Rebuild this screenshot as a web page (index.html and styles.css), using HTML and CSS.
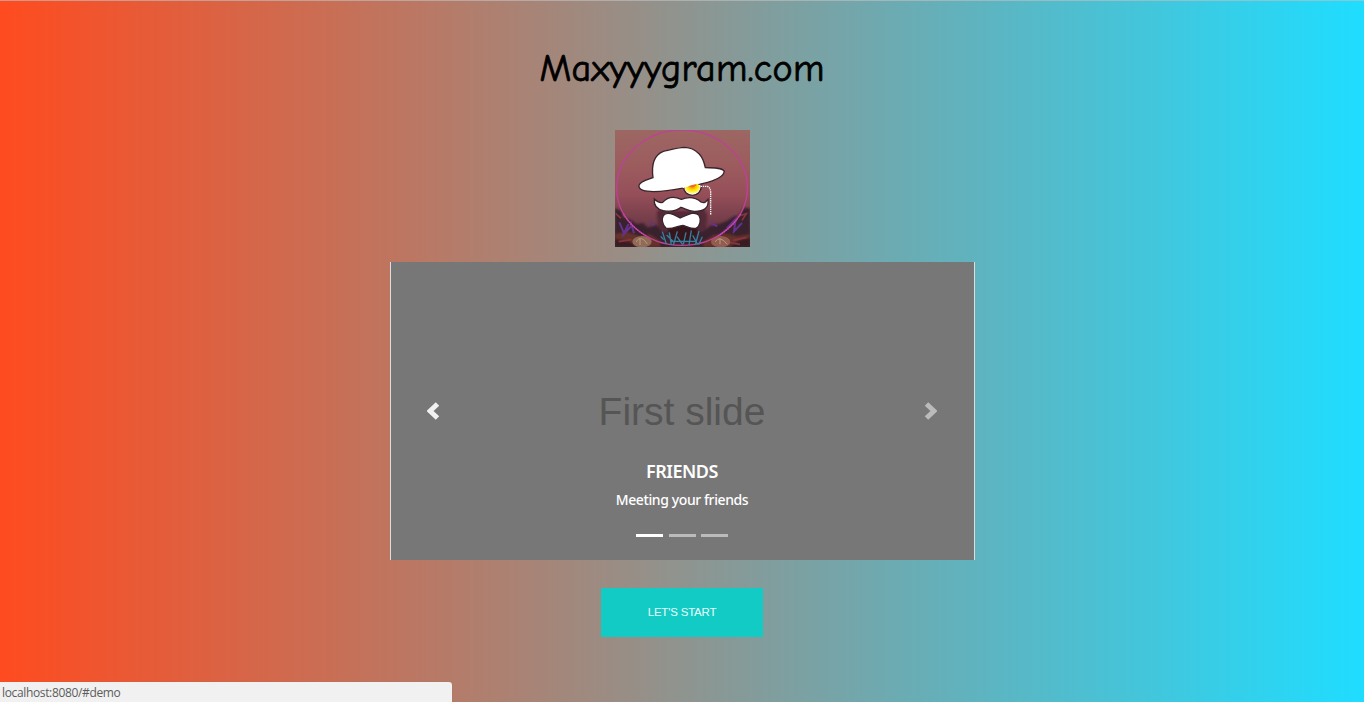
FILE: index.html
```html
<!DOCTYPE html>
<html lang="en">
<head>
<meta charset="utf-8">
<title>Maxyyygram.com</title>
<link rel="stylesheet" href="styles.css">
</head>
<body>
<main class="page">
  <h1 class="title">Maxyyygram.com</h1>
  <svg class="logo" viewBox="15 15 405 351" role="img" aria-label="Gentleman in a hat">
    <defs>
      <linearGradient id="sky" x1="0" y1="0" x2="0" y2="1">
        <stop offset="0" stop-color="#9c6763"/><stop offset=".3" stop-color="#9c5c5e"/><stop offset=".55" stop-color="#954f59"/><stop offset=".8" stop-color="#703b48"/><stop offset="1" stop-color="#45222a"/>
      </linearGradient>
      <radialGradient id="lens" cx=".5" cy=".35" r=".65">
        <stop offset="0" stop-color="#ed5714"/><stop offset=".25" stop-color="#f7ac0c"/><stop offset=".55" stop-color="#ffe900"/><stop offset="1" stop-color="#fffbd0"/>
      </radialGradient>
      <filter id="soft" x="-10%" y="-10%" width="120%" height="120%"><feGaussianBlur stdDeviation="2.5"/></filter>
    </defs>
    <rect x="15" y="15" width="405" height="351" fill="url(#sky)"/>
    <g filter="url(#soft)">
      <path d="M140 262L160 246L190 258H245L278 244L292 270L286 330H148Z" fill="#542b37"/>
      <path d="M15 250L33 257L40 277L62 285L80 298L98 294L112 308L140 300L155 320H280L300 304L330 296L352 287L370 275L388 270L402 248L420 250V366H15Z" fill="#38202d"/>
      <path d="M15 326L50 320L90 334L120 328L150 348V366H15ZM280 350L310 330L350 326L382 334L420 328V366H280Z" fill="#65302c"/>
      <path d="M15 342L60 350L80 366H15ZM360 366L390 344L420 338V366Z" fill="#381a20"/>
      <path d="M174 315L192 286L218 301L246 286L264 318L250 348H190Z" fill="#34151f"/>
    </g>
    <path d="M28 292L42 324L56 297M36 334L64 303M72 325L61 288M122 292L132 302M350 310L377 282L372 319L396 294M328 333L365 298M303 294L322 304" fill="none" stroke="#65318b" stroke-width="6"/>
    <path d="M17 265L33 280M382 274L409 266L396 286M26 350L64 344M370 346L410 337M350 351L390 358" stroke="#853540" fill="none" stroke-width="5"/>
    <ellipse cx="96" cy="350" rx="29" ry="17" fill="#916b59"/><ellipse cx="332" cy="350" rx="29" ry="17" fill="#925c50"/>
    <path d="M78 350Q94 328 112 357M90 339V360M315 350Q330 330 352 358M330 339V358" fill="none" stroke="#ba9a79" stroke-width="3"/>
    <ellipse cx="216" cy="188" rx="196" ry="173" fill="none" stroke="#bd4197" stroke-width="4"/>
    <path d="M41 268Q66 310 110 333M391 268Q366 310 322 333" fill="none" stroke="#dd4aba" stroke-width="4" stroke-dasharray="3 4"/>
    <path d="M157 320L169 357M152 334L161 344M178 322L184 360M170 330L194 354M202 319L190 361M201 335L218 359M228 322L220 358M244 316L237 360M248 331L263 358M267 318L256 360M277 335L266 359M183 349H258" fill="none" stroke="#397f9f" stroke-width="4"/>
    <g stroke="#3b252d" stroke-width="4" fill="#fff">
      <circle cx="247" cy="184" r="27"/>
      <path d="M133 222C141 230 148 235 158 232C172 216 191 213 214 223C237 214 259 219 273 231C284 236 288 230 294 223C298 250 279 259 255 259C236 260 226 251 213 247C198 260 178 260 160 257C141 253 131 240 133 222Z"/>
      <path d="M160 272C171 257 192 269 211 279C233 269 254 257 267 271C274 283 271 304 258 310C245 313 232 305 219 301C203 302 183 316 168 309C157 300 154 282 160 272Z"/>
      <path d="M129 158C124 121 132 90 160 79C178 75 201 68 224 67C242 67 257 76 267 86C280 99 283 114 286 128C308 129 340 127 343 140C338 164 293 174 219 189C189 195 171 199 131 200C108 199 85 197 87 181C91 168 113 164 129 158Z"/>
    </g>
    <ellipse cx="247" cy="189" rx="23" ry="18" fill="url(#lens)"/>
    <path d="M215 173Q248 170 278 158L279 172L218 190Z" fill="#fff"/>
    <path d="M234 184Q248 190 261 180L256 178Z" fill="#ef681c"/>
    <path d="M272 184H292Q302 188 302 202V271" fill="none" stroke="#fff" stroke-width="4" stroke-dasharray="4 2.5"/>
  </svg>
  <section class="carousel">
    <div class="slide-name">First slide</div>
    <svg class="arrow prev" viewBox="0 0 13 18"><path d="M10.5 2L3 9L10.5 16"/></svg>
    <svg class="arrow next" viewBox="0 0 13 18"><path d="M2.5 2L10 9L2.5 16"/></svg>
    <div class="caption">
      <h2 class="caption-title">FRIENDS</h2>
      <p class="caption-text">Meeting your friends</p>
    </div>
    <div class="indicators"><span class="dot active"></span><span class="dot"></span><span class="dot"></span></div>
  </section>
  <button class="start">LET'S START</button>
</main>
<div class="status">localhost:8080/#demo</div>
</body>
</html>
```
FILE: styles.css
```css
* { box-sizing: border-box; }
body {
  margin: 0;
  height: 702px;
  overflow: hidden;
  font-family: "Noto Sans", "Open Sans", sans-serif;
  background: linear-gradient(to right, #ff4b1f, #1fddff);
}
.page {
  height: 702px;
  border-top: 1px solid rgba(190, 190, 190, .65);
  display: flex;
  flex-direction: column;
  align-items: center;
}
.title {
  margin: 40px 0 33px;
  height: 56px;
  font: 400 38px/56px "Comic Sans MS", "Comic Neue", "Noto Sans", sans-serif;
  letter-spacing: .3px;
  -webkit-text-stroke: .8px #000;
  color: #000;
  white-space: nowrap;
}
.logo { width: 135px; height: 117px; flex: none; }
.carousel {
  position: relative;
  width: 585px;
  height: 298px;
  margin-top: 15px;
  flex: none;
  background: #777;
  border: solid #dedede;
  border-width: 0 1px;
}
.slide-name {
  padding-top: 127px;
  text-align: center;
  font: 39px/46px "Liberation Sans", Arial, sans-serif;
  color: #555;
}
.arrow {
  position: absolute;
  top: 140px;
  width: 13px;
  height: 18px;
  fill: none;
  stroke: #f1f1f1;
  stroke-width: 5;
}
.prev { left: 36px; }
.next { right: 37px; stroke: #bbb; }
.caption { color: #fff; text-align: center; padding-top: 24px; }
.caption-title { margin: 0; font-size: 18px; line-height: 25px; font-weight: 600; letter-spacing: -.5px; }
.caption-text { margin: 6px 0 0; font-size: 14px; line-height: 20px; font-weight: 500; letter-spacing: -.4px; }
.indicators { display: flex; justify-content: center; gap: 5.5px; margin-top: 24px; }
.dot { width: 27px; height: 3px; background: #bbb; }
.active { background: #fff; }
.start {
  width: 162px;
  height: 49px;
  margin: 28px 1px 0 0;
  padding: 0 0 2px 1px;
  border: 0;
  background: #12cbc4;
  color: #e9fffc;
  font: 11.5px "Liberation Sans", Arial, sans-serif;
  letter-spacing: -.2px;
}
.status {
  position: absolute;
  left: 0;
  bottom: 0;
  width: 452px;
  height: 20px;
  padding-left: 2px;
  border-top-right-radius: 3px;
  background: #f1f1f1;
  box-shadow: 0 0 1px #777;
  color: #5c5c5c;
  font: 12px/21px "Open Sans", "Noto Sans", sans-serif;
  letter-spacing: -.35px;
}
```
